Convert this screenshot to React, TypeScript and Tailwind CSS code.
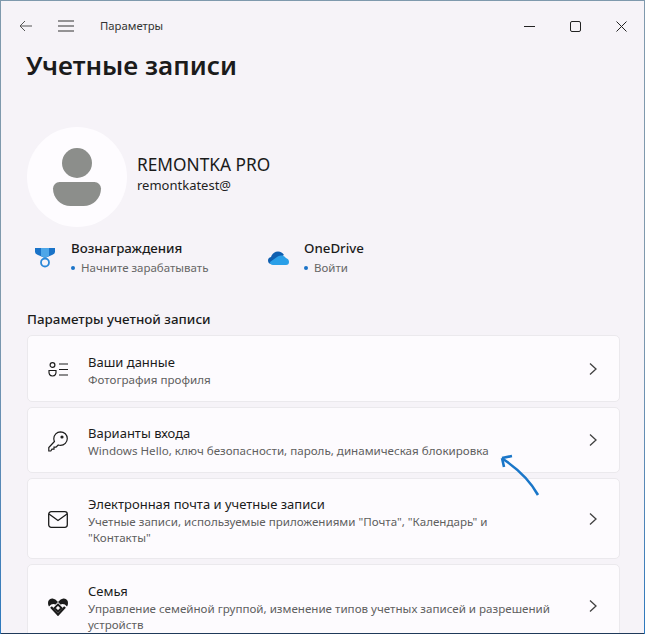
import type { ReactNode } from "react"

const font = { fontFamily: '"Noto Sans", "Open Sans", sans-serif' }

function Card({ icon, title, sub, h }: { icon: ReactNode; title: string; sub: ReactNode; h: string }) {
    return (
        <div className={`flex items-center ${h} shrink-0 rounded-[5px] border border-[#ebe9ed] bg-[#fdfbfe] pl-[20px] pr-[21px]`}>
            <div className="flex w-[20px] justify-center pt-[2px] text-[#1c1c1c]">{icon}</div>
            <div className="ml-[20px] flex-1 pt-[3px]">
                <div className="text-[13px] leading-[19px] text-[#1b1b1b]">{title}</div>
                <div className="text-[11.6px] leading-[16px] text-[#5f5f5f]">{sub}</div>
            </div>
            <svg width="10" height="14" viewBox="0 0 10 14" fill="none" stroke="#404040" strokeWidth="1.3">
                <path d="M2 1.5 L8 7 L2 12.5" />
            </svg>
        </div>
    )
}

export default function App() {
    return (
        <div className="h-[634px] w-[645px] overflow-hidden bg-gradient-to-b from-[#7f99ad] via-[#7f99ad] to-[#2b78bd] pb-0 pl-px pr-px pt-px">
            <div style={font} className="relative h-[632px] overflow-hidden bg-[#f6f3f8]">
                {/* Title bar */}
                <div className="flex h-[50px] items-center pl-[18px]">
                    <svg width="14" height="12" viewBox="0 0 14 12" fill="none" stroke="#555" strokeWidth="1">
                        <path d="M13 6 H1 M6 1 L1 6 L6 11" />
                    </svg>
                    <svg className="ml-[25px]" width="16" height="12" viewBox="0 0 16 12" fill="none" stroke="#333" strokeWidth="1">
                        <path d="M0 1 H16 M0 6 H16 M0 11 H16" />
                    </svg>
                    <div className="ml-[26px] text-[11.3px] text-[#333]">Параметры</div>
                    <div className="ml-auto flex items-center gap-[35px] pr-[17px]">
                        <svg width="11" height="11" viewBox="0 0 11 11" fill="none" stroke="#222" strokeWidth="1">
                            <path d="M0 5.5 H11" />
                        </svg>
                        <svg width="11" height="11" viewBox="0 0 11 11" fill="none" stroke="#222" strokeWidth="1">
                            <rect x="0.5" y="0.5" width="10" height="10" rx="1.5" />
                        </svg>
                        <svg width="11" height="11" viewBox="0 0 11 11" fill="none" stroke="#222" strokeWidth="1">
                            <path d="M0.5 0.5 L10.5 10.5 M10.5 0.5 L0.5 10.5" />
                        </svg>
                    </div>
                </div>

                <div className="pl-[26px] pr-[24px]">
                    <h1 className="-ml-px -mt-px text-[26px] font-semibold leading-[30px] text-[#1b1b1b]">Учетные записи</h1>

                    {/* Profile */}
                    <div className="mt-[47px] flex items-center">
                        <div className="flex h-[100px] w-[100px] flex-col items-center justify-center rounded-full bg-[#fefcff]">
                            <div className="h-[30px] w-[30px] rounded-full bg-[#8c8e8b]" />
                            <div className="mt-[4px] h-[24px] w-[48px] rounded-b-[24px] rounded-t-[9px] bg-[#8c8e8b]" />
                        </div>
                        <div className="ml-[10px] pb-[5px]">
                            <div className="text-[17.3px] leading-[22px] text-[#1b1b1b]">REMONTKA PRO</div>
                            <div className="text-[13px] leading-[19px] text-[#1f1f1f]">remontkatest@</div>
                        </div>
                    </div>

                    {/* Rewards + OneDrive */}
                    <div className="mt-[11px] flex">
                        <div className="flex w-[241px] items-center">
                            <svg className="ml-[8px]" width="20" height="20" viewBox="0 0 20 20">
                                <path d="M0 0 H20 V4 Q20 6 17 7 L10 10 L3 7 Q0 6 0 4 Z" fill="#1a73c8" />
                                <path d="M6 0 H14 V8 L10 10 L6 8 Z" fill="#4da6e8" />
                                <circle cx="10" cy="14.5" r="4" fill="none" stroke="#2b88d8" strokeWidth="1.8" />
                            </svg>
                            <div className="ml-[16px]">
                                <div className="text-[13.3px] font-medium leading-[20px] text-[#1b1b1b]">Вознаграждения</div>
                                <div className="mt-[1px] flex items-center text-[11.5px] leading-[18px] text-[#666]">
                                    <span className="mr-[6px] h-[4px] w-[4px] rounded-full bg-[#1a73c8]" />
                                    Начните зарабатывать
                                </div>
                            </div>
                        </div>
                        <div className="flex items-center">
                            <svg width="21" height="14" viewBox="0 0 21 14">
                                <path d="M4 13 Q0 13 0 9.5 Q0 6.5 3 6 Q5 0.5 10 0.5 Q14 0.5 16 4 L8 9 Z" fill="#0f5fb0" />
                                <path d="M5 14 Q2 14 2 11 L9 6 Q11 4 14 4.5 Q17 5 18 7 Q21 8 21 11 Q21 14 18 14 Z" fill="#2a9fe8" />
                            </svg>
                            <div className="ml-[15px]">
                                <div className="text-[13.3px] font-medium leading-[20px] text-[#1b1b1b]">OneDrive</div>
                                <div className="mt-[1px] flex items-center text-[11.5px] leading-[18px] text-[#666]">
                                    <span className="mr-[6px] h-[4px] w-[4px] rounded-full bg-[#1a73c8]" />
                                    Войти
                                </div>
                            </div>
                        </div>
                    </div>

                    <div className="mt-[32px] text-[13.4px] font-medium leading-[20px] text-[#1b1b1b]">Параметры учетной записи</div>

                    {/* Cards */}
                    <div className="mt-[6px] flex flex-col gap-[5px]">
                        <Card
                            h="h-[67px]"
                            title="Ваши данные"
                            sub="Фотография профиля"
                            icon={
                                <svg width="20" height="15" viewBox="0 0 20 15" fill="none" stroke="currentColor" strokeWidth="1.2">
                                    <circle cx="4.5" cy="3" r="2.4" />
                                    <path d="M1 8.5 H8 Q8.5 14 4.5 14 Q0.5 14 1 8.5 Z" />
                                    <path d="M11 2 H20 M11 7.5 H20 M11 13 H20" />
                                </svg>
                            }
                        />
                        <Card
                            h="h-[66px]"
                            title="Варианты входа"
                            sub="Windows Hello, ключ безопасности, пароль, динамическая блокировка"
                            icon={
                                <svg width="20" height="21" viewBox="0 0 20 21" fill="none" stroke="currentColor" strokeWidth="1.2">
                                    <path d="M12.5 0.8 A6.8 6.8 0 0 1 12.5 14.4 Q11.3 14.4 10.2 14 L8 16.2 H6 V18.2 H4 L2.8 20 H0.8 V16.5 L6.4 10.5 Q5.8 9 5.8 7.6 A6.8 6.8 0 0 1 12.5 0.8 Z" />
                                    <circle cx="14" cy="6" r="1" fill="currentColor" />
                                </svg>
                            }
                        />
                        <Card
                            h="h-[81px]"
                            title="Электронная почта и учетные записи"
                            sub={
                                <>
                                    Учетные записи, используемые приложениями "Почта", "Календарь" и
                                    <br />
                                    "Контакты"
                                </>
                            }
                            icon={
                                <svg width="20" height="17" viewBox="0 0 20 17" fill="none" stroke="currentColor" strokeWidth="1.3">
                                    <rect x="0.7" y="0.7" width="18.6" height="15.6" rx="2.5" />
                                    <path d="M1 3 L10 9.5 L19 3" />
                                </svg>
                            }
                        />
                        <Card
                            h="h-[84px]"
                            title="Семья"
                            sub={
                                <>
                                    Управление семейной группой, изменение типов учетных записей и разрешений
                                    <br />
                                    устройств
                                </>
                            }
                            icon={
                                <svg width="20" height="18" viewBox="0 0 20 18">
                                    <path d="M10 4 Q7 0 4 0.5 Q0 1 0 5 Q0 7 1 8.5 Q4 5 7.5 6.5 Z" fill="currentColor" />
                                    <path d="M10 4 Q13 0 16 0.5 Q20 1 20 5 Q20 7 19 8.5 Q16 5 12.5 6.5 Z" fill="currentColor" />
                                    <path d="M3 9 L10 16.5 L17 9" fill="none" stroke="currentColor" strokeWidth="2.4" />
                                    <path d="M10 6.5 L13.5 10 L10 13.5 L6.5 10 Z" fill="none" stroke="currentColor" strokeWidth="1.8" />
                                </svg>
                            }
                        />
                    </div>
                </div>

                {/* Annotation arrow */}
                <svg className="absolute left-[498px] top-[451px]" width="44" height="46" viewBox="0 0 44 46" fill="none" stroke="#1a76c8" strokeWidth="2.6">
                    <path d="M39 43 Q28 23 4 7" />
                    <path d="M3 6 L5 15 M3 6 L13 4" />
                </svg>
            </div>
            <div className="h-px bg-[#1f3a5a]" />
        </div>
    )
}
